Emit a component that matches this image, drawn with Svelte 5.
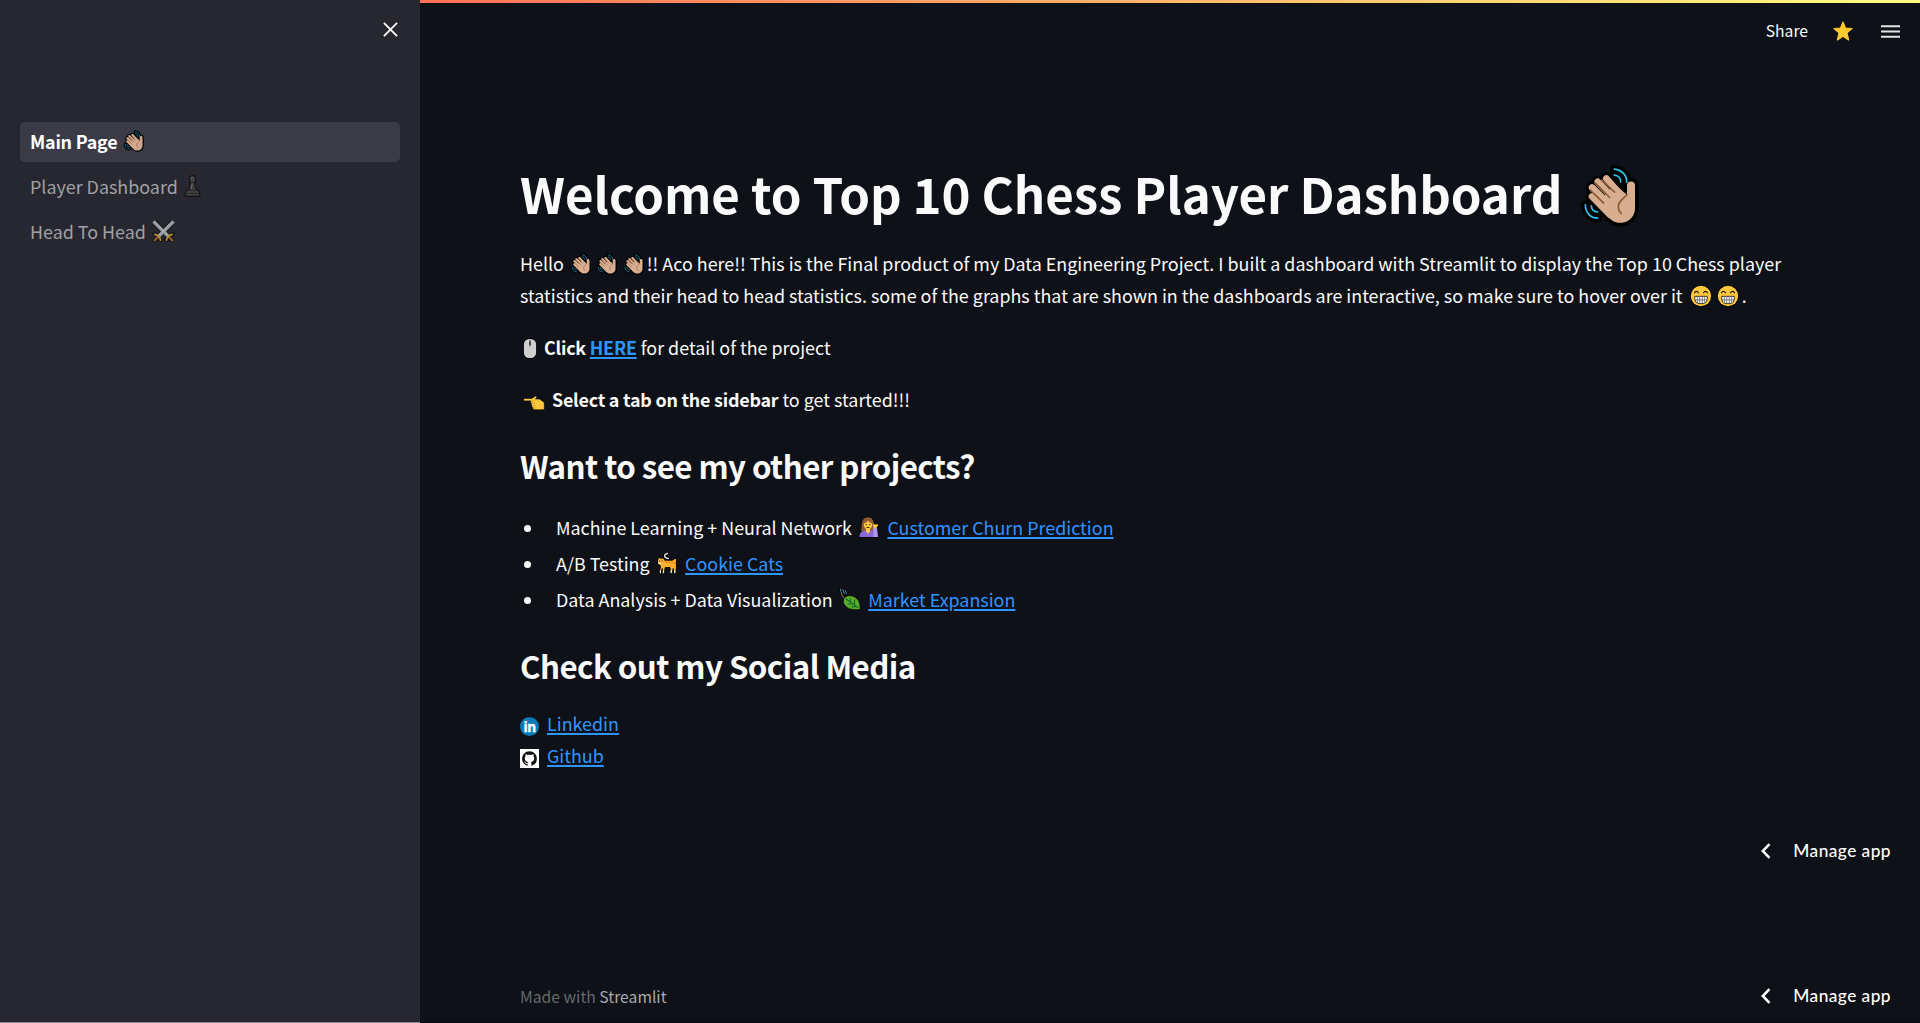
<script>
  const pages = [
    { label: 'Main Page', icon: 'wave', active: true },
    { label: 'Player Dashboard', icon: 'pawn', active: false },
    { label: 'Head To Head', icon: 'swords', active: false },
  ];

  const projects = [
    { topic: 'Machine Learning + Neural Network', icon: 'woman', link: 'Customer Churn Prediction' },
    { topic: 'A/B Testing', icon: 'cat', link: 'Cookie Cats' },
    { topic: 'Data Analysis + Data Visualization', icon: 'leaf', link: 'Market Expansion' },
  ];
</script>

{#snippet emoji(name)}
  {#if name === 'wave'}
    <svg class="emoji wave" viewBox="0 0 174 188" fill="none" stroke-linecap="round" stroke-linejoin="round">
      <g stroke="#000">
        <path stroke-width="26" d="M100 15C125 18 138 35 137 54M100 33C112 34 120 42 119 53M13 122C13 145 28 162 50 162M31 125C32 138 38 143 50 143" />
        <path stroke-width="38" d="M76 43L118 90M50 53L100 105M33 70L90 125M33 97L85 150" />
        <path stroke-width="22" fill="#000" d="M138 92V64a12 12 0 0 1 24 0V132C162 160 140 176 117 176C100 176 90 168 80 158L50 120L100 70Z" />
      </g>
      <g stroke="#d8ae91">
        <path stroke-width="20" d="M76 43L118 90M50 53L100 105M33 70L90 125M33 97L85 150" />
        <path stroke="none" fill="#d8ae91" d="M138 92V64a12 12 0 0 1 24 0V132C162 160 140 176 117 176C100 176 90 168 80 158L50 120L100 60Z" />
      </g>
      <path stroke="#8d5a34" stroke-width="5" d="M62 48L101 84M42 56L86 100M28 78L68 117M138 92C125 104 112 112 112 128C112 138 116 144 121 148" />
      <path stroke="#2cc3ec" stroke-width="5" d="M100 15C125 18 138 35 137 54M100 33C112 34 120 42 119 53M13 122C13 145 28 162 50 162M31 125C32 138 38 143 50 143" />
    </svg>
  {:else if name === 'pawn'}
    <svg class="emoji pawn" viewBox="0 0 17 22">
      <path fill="#414144" stroke="#131316" stroke-width="1.200" stroke-linejoin="round" d="M8.500 .7a3.200 3.200 0 0 1 2.500 5.200l.9 1-1.200 1.100c.1 3 .8 5.300 2.100 6.800 1.800.7 2.900 2 3 3.400v3.200H1.200v-3.200c.1-1.400 1.200-2.700 3-3.400 1.300-1.500 2-3.800 2.100-6.800L5.100 6.900l.9-1A3.200 3.200 0 0 1 8.500.7z" />
      <path stroke="#1d1d20" stroke-width=".8" fill="none" d="M6 7.500h5M4.300 15.200h8.400M1.600 18.500h13.800" />
      <path stroke="#6a6a6e" stroke-width="1" d="M7.700 2.500l-.3 1.300M8 9l-.6 4.500" />
    </svg>
  {:else if name === 'swords'}
    <svg class="emoji swords" viewBox="0 0 23 23" fill="none" stroke-linejoin="round">
      <path stroke="#151518" stroke-width="5.500" d="M2 2L19 19M21 2L4 19" />
      <path stroke="#151518" stroke-width="4" stroke-linecap="round" d="M2.500 14L9 20M20.500 14L14 20M2.500 20.500L6 17M20.500 20.500L17 17" />
      <path stroke="#8f9498" stroke-width="3.600" d="M1.500 1.500L17 17M21.500 1.500L6 17" />
      <path stroke="#b6b9bc" stroke-width="1" d="M2 1.500L16 15.500M21 1.500L7 15.500" />
      <path stroke="#b58a2c" stroke-width="1.800" stroke-linecap="round" d="M3 14.500C4.500 14.500 8.500 18 8.500 20M20 14.500C18.500 14.500 14.500 18 14.500 20" />
      <path stroke="#99622e" stroke-width="2" stroke-linecap="round" d="M2.500 20.500L5 18M20.500 20.500L18 18" />
    </svg>
  {:else if name === 'grin'}
    <svg class="emoji grin" viewBox="0 0 21 21">
      <circle cx="10.500" cy="10.500" r="10.300" fill="#000" />
      <circle cx="10.500" cy="10.500" r="9.700" fill="#ffc83d" />
      <path fill="none" stroke="#1d160c" stroke-width="1.100" stroke-linecap="round" d="M4.300 7.500c.8-1.800 2.900-1.800 3.700 0M13 7.500c.8-1.800 2.900-1.800 3.700 0" />
      <path fill="#fff" stroke="#33281c" stroke-width=".9" d="M4.500 10.800h12v2.500a5 5 0 0 1-5 4.500h-2a5 5 0 0 1-5-4.500z" />
      <path stroke="#555" stroke-width=".7" d="M7 11v6M9.300 11v6.600M11.700 11v6.600M14 11v6M4.700 14.200h11.600" />
    </svg>
  {:else if name === 'mouse'}
    <svg class="emoji mouse" viewBox="0 0 14 21">
      <rect x=".2" y=".2" width="13.600" height="20.600" rx="6" fill="#000" />
      <rect x=".9" y=".9" width="12.200" height="19.200" rx="5.300" fill="#cfcfcf" />
      <path stroke="#777" stroke-width="1" d="M7 1.500V9" />
      <rect x="6.200" y="3" width="1.700" height="4.200" rx=".8" fill="#333" />
    </svg>
  {:else if name === 'point'}
    <svg class="emoji point" viewBox="0 0 22 16">
      <path fill="#ffc83d" stroke="#000" stroke-width=".6" stroke-linejoin="round" d="M1.200 3.400h7.600L12.500 1c1.300.3 1.600 1.500.7 2.300l-.7.600 4 .2 4.800 3.300v7.400H11.500c-1.800 0-2-1.500-1.500-2-1.200-.4-1.500-1.600-.9-2.200-1-.5-1.400-1.700-.7-2.500-.9-.5-1-1.500-.6-2.200H1.500C.3 5.900.2 3.700 1.200 3.400z" />
      <path stroke="#d18c1c" stroke-width=".7" fill="none" d="M8 6h4M9 8.300h3M9.800 10.700h2.700M10.500 13h2.500" />
    </svg>
  {:else if name === 'woman'}
    <svg class="emoji woman" viewBox="0 0 22 22">
      <path fill="#000" d="M2 20C3 13 3.300 2 9.500.500c6 .2 7.800 5 7.500 7l4 .2.500 2.300-2 4 1 8H.8z" />
      <path fill="#8d5a34" d="M9.800 1.200c5 0 6.500 4 6.300 9L17 15H3c1.200-5-.3-13.800 6.800-13.800z" />
      <path fill="#8b68d8" d="M1.300 21c.2-4 2.400-6.500 6-6.500h5.500c3.500 0 5 2.500 5 6.500z" />
      <path fill="#b296ee" d="M15.500 21l-.5-10 4 .2 1 9.800z" />
      <path fill="#ffc83d" d="M8 12h4v3.500l-2 2.500-2-2.500zM15 8.200l5.300.3-.3 1.500-2.500 2-2-.5z" />
      <path fill="#ffc83d" d="M5.900 7.500C7.500 7 9 6 10 4.500c1 1.500 2.500 2.500 4.200 3 .3 3.500-1.600 6-4.200 6s-4.300-2.500-4.100-6z" />
      <path stroke="#40301d" stroke-width="1.100" stroke-linecap="round" d="M8.200 8.400v.4M11.800 8.400v.4M9 11.500h2" />
    </svg>
  {:else if name === 'cat'}
    <svg class="emoji cat" viewBox="0 0 22 24" stroke-linejoin="round" stroke-linecap="round">
      <path fill="none" stroke="#000" stroke-width="3.800" d="M12.500 7.500C10 7 7.500 5.500 8.800 3c.5-1 2-.6 2.500-1.500" />
      <path fill="#ffb02e" stroke="#000" stroke-width="1" d="M1 8.500l1.200-3.200L4 7l2-.5L7.500 7l1 2h8.500l3-2.500 1.300 2V17l-.8 6h-2.200l-.5-5-1 5h-2l-.5-6H9l-.8 6H6l-.3-5-1 5h-2l1.200-8L1 13z" />
      <path fill="none" stroke="#e7e7e7" stroke-width="1.600" d="M12.500 7C10 7 7.500 5.500 8.800 3c.5-1 2-.6 2.500-1.500" />
      <path fill="none" stroke="#f5f5f5" stroke-width="1.300" d="M3.800 20.500v2M7.200 20.500v2M15.500 20.500v2M19.500 20.500v2M2 11.800l2 .5" />
      <path stroke="#c46a16" stroke-width=".9" d="M10.500 9.500v2.500M13.500 9.500v2.500M16.500 9.500v2.500M18.500 12h2" />
      <path stroke="#222" stroke-width="1" d="M3 9.800v.2M5.800 9.800v.2" />
    </svg>
  {:else if name === 'leaf'}
    <svg class="emoji leaf" viewBox="0 0 22 22" fill="none" stroke-linecap="round">
      <path stroke="#000" stroke-width="3.500" d="M1.500 1.500L7 10M4.500 2L7.500 7" />
      <path stroke="#5b8fae" stroke-width="1" d="M1.300 1l1.500 5M3.800 1.300l1.500 4.500M6.300 2.500l1.200 3.500" />
      <path stroke="#8d5a34" stroke-width="1.200" d="M2.500 6.500l3 4" />
      <path fill="#5aac2c" stroke="#000" stroke-width=".6" d="M4.200 12.500C5 7.500 11 6.500 15.500 9c5 3 5.700 7 5.700 12.500-5 .3-10.500.3-13.500-2.300-2.200-2-3.800-4.500-3.500-6.700z" />
      <path stroke="#17702a" stroke-width="1.200" d="M7 11l12 8.500M11.500 10.500v3.500M15.500 12v4.500M9 16h5M13 18.700h5" />
    </svg>
  {/if}
{/snippet}

{#snippet manage()}
  <button class="manage">
    <svg width="11" height="16" viewBox="0 0 11 16"><path d="M9.500 1.200L2.800 8l6.700 6.800" fill="none" stroke="#fff" stroke-width="2.500" /></svg>
    Manage app
  </button>
{/snippet}

<div class="app">
  <aside>
    <div class="side-top">
      <svg width="15" height="15" viewBox="0 0 15 15"><path d="M.9.900l13.200 13.200M14.100.900L.9 14.100" stroke="#fafafa" stroke-width="1.900" /></svg>
    </div>
    <nav>
      {#each pages as page}
        <a href="#top" class:active={page.active}><span>{page.label}</span>{@render emoji(page.icon)}</a>
      {/each}
    </nav>
  </aside>

  <main>
    <header>
      <span class="share">Share</span>
      <svg class="star" width="20" height="20" viewBox="0 0 20 20"><path fill="#fdcb2e" stroke="#fdcb2e" stroke-width="1.200" stroke-linejoin="round" d="M10 1l2.400 6 6.600.500-5 4.400 1.600 7L10 15.200 4.400 18.900l1.600-7-5-4.400L7.600 7z" /></svg>
      <svg class="menu" width="19" height="13" viewBox="0 0 19 13"><path stroke="#e4e4e5" stroke-width="2" d="M0 1.200h19M0 6.500h19M0 11.800h19" /></svg>
    </header>

    <article>
      <h1><span>Welcome to Top 10 Chess Player Dashboard</span>{@render emoji('wave')}</h1>
      <p>
        Hello {@render emoji('wave')}{@render emoji('wave')}{@render emoji('wave')}!! Aco here!! This is the Final product of my Data Engineering Project. I built a dashboard with Streamlit to display the Top 10 Chess player statistics and their head to head statistics. some of the graphs that are shown in the dashboards are interactive, so make sure to hover over it {@render emoji('grin')}{@render emoji('grin')}.
      </p>
      <p>{@render emoji('mouse')}<strong>Click <a href="#here">HERE</a></strong> for detail of the project</p>
      <p>{@render emoji('point')}<strong>Select a tab on the sidebar</strong> to get started!!!</p>

      <h2>Want to see my other projects?</h2>
      <ul>
        {#each projects as project}
          <li><span>{project.topic}</span>{@render emoji(project.icon)}<a href="#project">{project.link}</a></li>
        {/each}
      </ul>

      <h2 class="social-title">Check out my Social Media</h2>
      <div class="social">
        <svg width="19" height="19" viewBox="0 0 19 19">
          <circle cx="9.500" cy="9.500" r="9.500" fill="#0a7ab5" />
          <text x="9.600" y="14.600" text-anchor="middle">in</text>
        </svg>
        <a href="#linkedin">Linkedin</a>
      </div>
      <div class="social">
        <svg width="19" height="19" viewBox="0 0 19 19">
          <rect width="19" height="19" fill="#fff" />
          <path transform="translate(2.100 2.300) scale(.925)" fill="#111" d="M8 0C3.580 0 0 3.580 0 8c0 3.540 2.290 6.530 5.470 7.590.4.070.55-.17.55-.38 0-.19-.01-.82-.01-1.490-2.010.37-2.530-.49-2.690-.94-.09-.23-.48-.94-.82-1.130-.28-.15-.68-.52-.01-.53.63-.01 1.080.58 1.230.82.72 1.210 1.870.87 2.330.66.07-.52.28-.87.51-1.070-1.780-.2-3.640-.89-3.640-3.950 0-.87.31-1.590.82-2.150-.08-.2-.36-1.020.08-2.120 0 0 .67-.21 2.200.82.64-.18 1.320-.27 2-.27s1.360.09 2 .27c1.530-1.040 2.200-.82 2.200-.82.44 1.100.16 1.920.08 2.120.51.56.82 1.270.82 2.150 0 3.070-1.870 3.750-3.650 3.950.29.25.54.73.54 1.480 0 1.070-.01 1.930-.01 2.200 0 .21.15.46.55.38A8.010 8.010 0 0 0 16 8c0-4.420-3.580-8-8-8z" />
        </svg>
        <a href="#github">Github</a>
      </div>
    </article>

    {@render manage()}

    <footer>
      <div class="credit">Made with <span>Streamlit</span></div>
      {@render manage()}
    </footer>
  </main>
</div>

<style>
  :global(body) {
    margin: 0;
    background: #0e1117;
  }

  .app {
    display: flex;
    width: 100%;
    height: 1023px;
    overflow: hidden;
    box-sizing: border-box;
    color: #fafafa;
    font: 400 17.9px/32px 'Noto Sans CJK JP', 'Noto Sans', sans-serif;
  }

  aside {
    flex: 0 0 420px;
    box-sizing: border-box;
    background: #262730;
    border-bottom: 1px solid #8b8b90;
  }

  .side-top {
    display: flex;
    justify-content: flex-end;
    height: 100px;
    padding: 22px 22px 0 0;
  }

  nav {
    display: flex;
    flex-direction: column;
    gap: 5px;
    padding: 0 20px;
  }

  nav a {
    display: flex;
    align-items: center;
    box-sizing: border-box;
    height: 40px;
    padding: 0 10px 2px;
    border-radius: 5px;
    color: #a0a0a4;
    text-decoration: none;
  }

  nav a.active {
    background: #3b3b47;
    color: #fff;
    font-weight: 600;
    letter-spacing: -.22px;
  }

  main {
    flex: 1;
    display: flex;
    flex-direction: column;
    min-width: 0;
    box-sizing: border-box;
    border-bottom: 1px solid #08050c;
    background: linear-gradient(90deg, #ff7057, #fffd80) top / 100% 3px no-repeat #0e1117;
  }

  header {
    display: flex;
    justify-content: flex-end;
    align-items: center;
    height: 62px;
    padding-right: 20px;
    flex: none;
  }

  .share {
    font-size: 15.7px;
  }

  .star {
    margin: 0 28px 0 25px;
  }

  article {
    height: 773px;
    flex: none;
    box-sizing: border-box;
    padding: 98px 100px 0;
  }

  h1 {
    display: flex;
    align-items: center;
    margin: 0 0 21px;
    height: 66px;
    font-size: 49.2px;
    line-height: 66px;
    font-weight: 700;
    letter-spacing: -.06px;
    white-space: nowrap;
  }

  p {
    margin: 0 0 20px;
  }

  strong {
    font-weight: 600;
    letter-spacing: -.22px;
  }

  article a {
    color: #2f95ff;
    text-decoration: underline;
    text-decoration-thickness: 2px;
    text-underline-offset: 2px;
  }

  h2 {
    margin: 30px 0 24px;
    font-size: 31.3px;
    line-height: 42px;
    font-weight: 600;
    letter-spacing: -.57px;
  }

  .social-title {
    margin: 30px 0 20px;
  }

  ul {
    display: flex;
    flex-direction: column;
    gap: 4px;
    margin: 0;
    padding: 0;
    list-style: none;
  }

  li {
    display: flex;
    align-items: center;
    height: 32px;
  }

  li::before {
    content: '';
    width: 7px;
    height: 7px;
    margin: 2px 25px 0 4px;
    border-radius: 50%;
    background: #fafafa;
  }

  .social {
    display: flex;
    align-items: center;
    gap: 8px;
    height: 32px;
  }

  .social svg {
    margin-top: 7px;
  }

  .social text {
    fill: #fff;
    stroke: #fff;
    stroke-width: .4px;
    font: 700 13.500px 'Open Sans', sans-serif;
    letter-spacing: -.5px;
  }

  .emoji {
    flex: none;
    display: inline-block;
    vertical-align: -4px;
  }

  .wave {
    width: 21.500px;
    height: 22px;
    margin: 0 2.600px 0 2.200px;
  }

  nav .emoji {
    margin: 0 0 0 6px;
  }

  nav .wave {
    opacity: .95;
  }

  h1 .wave {
    width: 58px;
    height: 63px;
    margin: 4px 0 0 19px;
  }

  .pawn {
    width: 17px;
    height: 22px;
  }

  .swords {
    width: 23px;
    height: 23px;
  }

  .grin {
    width: 22px;
    height: 22px;
    margin: 0 2.500px 0 3px;
  }

  .mouse {
    width: 14px;
    height: 21px;
    margin: 0 7px 0 3px;
  }

  .point {
    width: 22px;
    height: 16px;
    margin: 0 7px 0 3px;
  }

  li .emoji {
    width: 22px;
    height: 22px;
    margin: 0 7px 0 6.500px;
  }

  .manage {
    display: flex;
    align-items: center;
    align-self: flex-end;
    gap: 22px;
    height: 32px;
    margin: 0 29px 0 0;
    padding: 0;
    border: 0;
    background: none;
    color: #fff;
    font: 500 17.300px/32px 'Lato', sans-serif;
    letter-spacing: .450px;
  }

  footer {
    display: flex;
    justify-content: space-between;
    align-items: flex-end;
    margin-top: 113px;
    padding-left: 100px;
  }

  .credit {
    height: 31px;
    color: #66686c;
    font-size: 15.7px;
  }

  .credit span {
    color: #a9aaac;
  }
</style>
